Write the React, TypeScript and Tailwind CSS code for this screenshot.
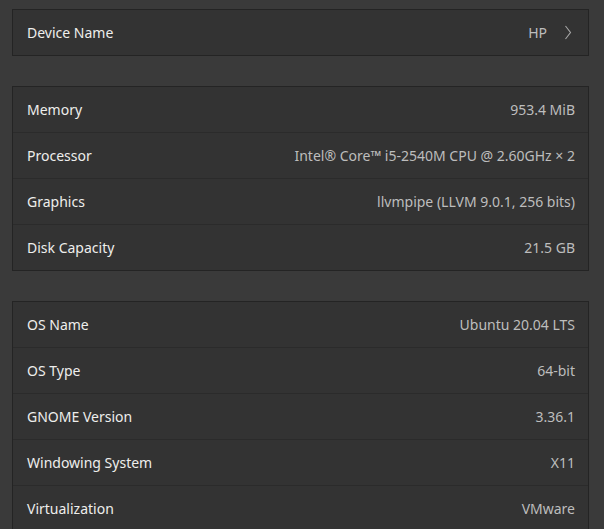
const groups: { label: string; value: string; link?: boolean }[][] = [
  [{ label: 'Device Name', value: 'HP', link: true }],
  [
    { label: 'Memory', value: '953.4 MiB' },
    { label: 'Processor', value: 'Intel® Core™ i5-2540M CPU @ 2.60GHz × 2' },
    { label: 'Graphics', value: 'llvmpipe (LLVM 9.0.1, 256 bits)' },
    { label: 'Disk Capacity', value: '21.5 GB' },
  ],
  [
    { label: 'OS Name', value: 'Ubuntu 20.04 LTS' },
    { label: 'OS Type', value: '64-bit' },
    { label: 'GNOME Version', value: '3.36.1' },
    { label: 'Windowing System', value: 'X11' },
    { label: 'Virtualization', value: 'VMware' },
  ],
]

function Chevron() {
  return (
    <svg width="8" height="15" viewBox="0 0 8 15" className="ml-[17px] mr-[3px]">
      <path d="M1.5 1 L6.5 7.5 L1.5 14" fill="none" stroke="#a8a8a8" strokeWidth="1.1" />
    </svg>
  )
}

export default function App() {
  return (
    <div
      className="min-h-screen bg-[#3a3a3a] pt-[9px] pl-[12px] pr-[15px] text-[14px]"
      style={{ fontFamily: '"Noto Sans", "Open Sans", sans-serif' }}
    >
      <div className="flex flex-col gap-[30px]">
        {groups.map((rows, i) => (
          <div key={i} className="bg-[#333333] border border-[#242424] divide-y divide-[#2b2b2b]">
            {rows.map((row) => (
              <div key={row.label} className="box-content h-[45px] flex items-center pl-[14px] pr-[13px]">
                <span className="text-[#eeeeec]">{row.label}</span>
                <span className="ml-auto flex items-center text-[#bdbdbd]">
                  {row.value}
                  {row.link && <Chevron />}
                </span>
              </div>
            ))}
          </div>
        ))}
      </div>
    </div>
  )
}
